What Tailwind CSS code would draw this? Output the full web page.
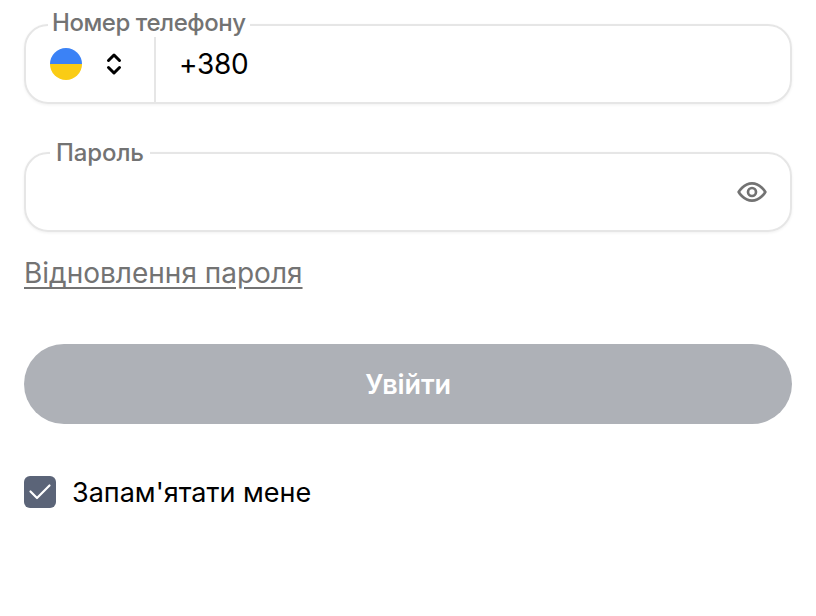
<!DOCTYPE html>
<html lang="uk">
<head>
  <meta charset="UTF-8">
  <title>Вхід</title>
  <script src="https://cdn.jsdelivr.net/npm/@tailwindcss/browser@4"></script>
</head>
<body class="bg-white font-['Inter',sans-serif] w-[816px] h-[616px] overflow-hidden">
  <div class="px-6 pt-6">
    <!-- phone -->
    <div class="relative h-20 border-2 border-[#e6e6e6] rounded-[24px] shadow-[0_1px_3px_rgba(0,0,0,0.06)] flex items-stretch">
      <span class="absolute left-[22px] top-[-17px] bg-white px-1 text-[24px] leading-[28px] font-medium tracking-[-0.45px] text-[#737373]">Номер телефону</span>
      <div class="w-[130px] flex items-center pl-6 border-r-2 border-[#e6e6e6]">
        <div class="w-8 h-8 rounded-full overflow-hidden flex flex-col">
          <div class="h-4 bg-[#3b82f6]"></div>
          <div class="h-4 bg-[#facc15]"></div>
        </div>
        <svg class="ml-[21px]" width="22" height="26" viewBox="0 0 22 26" fill="none" stroke="#000" stroke-width="3" stroke-linecap="round" stroke-linejoin="round"><path d="M5.500 9.500 11 4l5.500 5.500"/><path d="M5.500 16.500 11 22l5.500-5.500"/></svg>
      </div>
      <div class="flex items-center pl-[23px] text-[28px] tracking-[-0.25px] text-black">+380</div>
    </div>
    <!-- password -->
    <div class="relative h-20 mt-12 border-2 border-[#e6e6e6] rounded-[24px] shadow-[0_1px_3px_rgba(0,0,0,0.06)] flex items-center justify-end pr-[22px]">
      <span class="absolute left-[24px] top-[-15px] bg-white px-[6px] text-[24px] leading-[28px] font-medium tracking-[-0.1px] text-[#737373]">Пароль</span>
      <svg width="32" height="32" viewBox="0 0 24 24" fill="none" stroke="#737373" stroke-width="2" stroke-linecap="round" stroke-linejoin="round"><path d="M2 12s3.600-6.500 10-6.500S22 12 22 12s-3.600 6.500-10 6.500S2 12 2 12Z"/><circle cx="12" cy="12" r="3"/></svg>
    </div>
    <a class="block mt-[25px] text-[28px] leading-[32px] text-[#737373] underline underline-offset-4" href="#">Відновлення пароля</a>
    <button class="block w-full h-20 mt-[55px] pt-[2px] rounded-[40px] bg-[#aeb1b7] text-white text-[27px] font-semibold tracking-[-0.1px]">Увійти</button>
    <label class="flex items-center gap-4 mt-[52px]">
      <span class="w-8 h-8 rounded-md bg-[#5b6478] flex items-center justify-center">
        <svg width="24" height="24" viewBox="0 0 24 24" fill="none" stroke="#fff" stroke-width="2.200" stroke-linecap="round" stroke-linejoin="round"><path d="M2.500 11.500 9 18 21.500 5.500"/></svg>
      </span>
      <span class="text-[27px] h-8 leading-[34px] text-black">Запам'ятати мене</span>
    </label>
  </div>
</body>
</html>
